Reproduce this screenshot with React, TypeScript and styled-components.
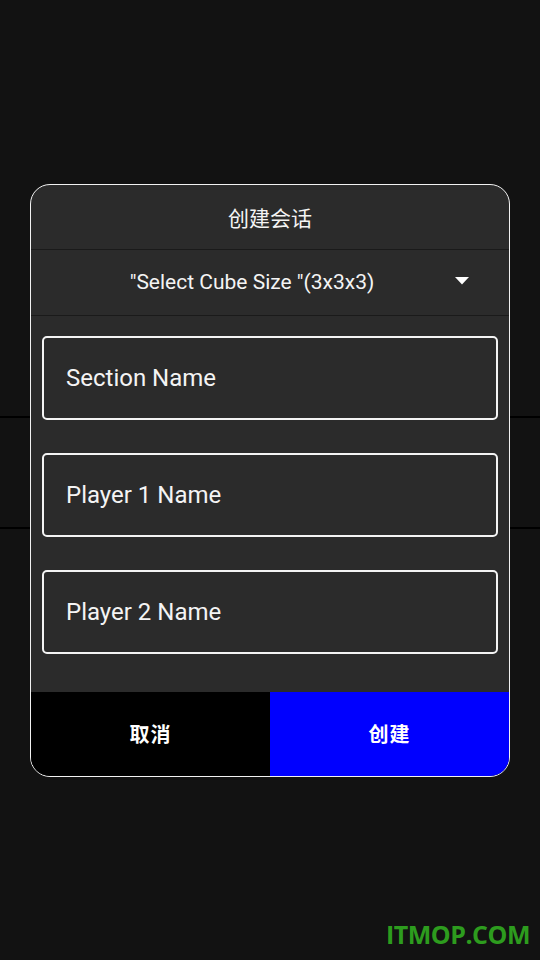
import React from 'react';
import styled, { createGlobalStyle } from 'styled-components';

const GlobalStyle = createGlobalStyle`
  html, body {
    margin: 0;
    padding: 0;
    background: #121212;
    font-family: Roboto, "Noto Sans CJK SC", sans-serif;
  }
  * {
    box-sizing: border-box;
  }
`;

const Screen = styled.div`
  position: relative;
  width: 540px;
  height: 960px;
  overflow: hidden;
  background: #121212;
`;

const List = styled.div`
  display: flex;
  flex-direction: column;
`;

const ListRow = styled.div<{ $height: number }>`
  height: ${(p) => p.$height}px;
  border-bottom: 2px solid #000;
`;

const Overlay = styled.div`
  position: absolute;
  inset: 0;
  display: flex;
  align-items: center;
  justify-content: center;
`;

const Dialog = styled.div`
  width: 480px;
  display: flex;
  flex-direction: column;
  background: #2b2b2b;
  border: 1px solid #f2f2f2;
  border-radius: 20px;
  overflow: hidden;
  color: #fff;
`;

const Header = styled.div`
  height: 65px;
  display: flex;
  align-items: center;
  justify-content: center;
  font-size: 21px;
  color: #f4f4f4;
  border-bottom: 1px solid #1a1a1a;
`;

const SelectRow = styled.div`
  height: 66px;
  display: flex;
  align-items: center;
  border-bottom: 1px solid #1a1a1a;
  cursor: pointer;
`;

const SelectLabel = styled.div`
  flex: 1;
  padding-left: 18px;
  text-align: center;
  font-size: 21px;
  color: #f4f4f4;
`;

const Caret = styled.svg`
  width: 14px;
  height: 8px;
  margin-right: 40px;
  margin-bottom: 2px;
`;

const Form = styled.div`
  display: flex;
  flex-direction: column;
  gap: 33px;
  padding: 20px 11px 38px;
`;

const Field = styled.input`
  height: 84px;
  width: 100%;
  padding: 0 22px;
  background: transparent;
  border: 2px solid #f4f4f4;
  border-radius: 5px;
  outline: none;
  color: #fff;
  font-family: Roboto, sans-serif;
  font-size: 24px;

  &::placeholder {
    color: #f4f4f4;
    opacity: 1;
  }
`;

const Actions = styled.div`
  display: grid;
  grid-template-columns: 1fr 1fr;
  height: 84px;
`;

const ActionButton = styled.button<{ $primary?: boolean }>`
  border: none;
  margin: 0;
  padding: 0;
  background: ${(p) => (p.$primary ? '#0000ff' : '#000')};
  color: #fff;
  font-family: "Noto Sans CJK SC", sans-serif;
  font-size: 20px;
  font-weight: 700;
  letter-spacing: 1px;
  cursor: pointer;
`;

const Watermark = styled.div`
  position: absolute;
  right: 10px;
  bottom: 9px;
  color: #2d9c1e;
  font-family: "Open Sans", sans-serif;
  font-weight: 700;
  font-size: 25px;
  letter-spacing: -0.5px;
`;

export default function App() {
  return (
    <Screen>
      <GlobalStyle />
      <List>
        <ListRow $height={418} />
        <ListRow $height={111} />
      </List>
      <Overlay>
        <Dialog>
          <Header>创建会话</Header>
          <SelectRow>
            <SelectLabel>"Select Cube Size "(3x3x3)</SelectLabel>
            <Caret viewBox="0 0 14 8">
              <path d="M0 0 L14 0 L7 7.5 Z" fill="#fff" />
            </Caret>
          </SelectRow>
          <Form>
            <Field placeholder="Section Name" />
            <Field placeholder="Player 1 Name" />
            <Field placeholder="Player 2 Name" />
          </Form>
          <Actions>
            <ActionButton>取消</ActionButton>
            <ActionButton $primary>创建</ActionButton>
          </Actions>
        </Dialog>
      </Overlay>
      <Watermark>ITMOP.COM</Watermark>
    </Screen>
  );
}
